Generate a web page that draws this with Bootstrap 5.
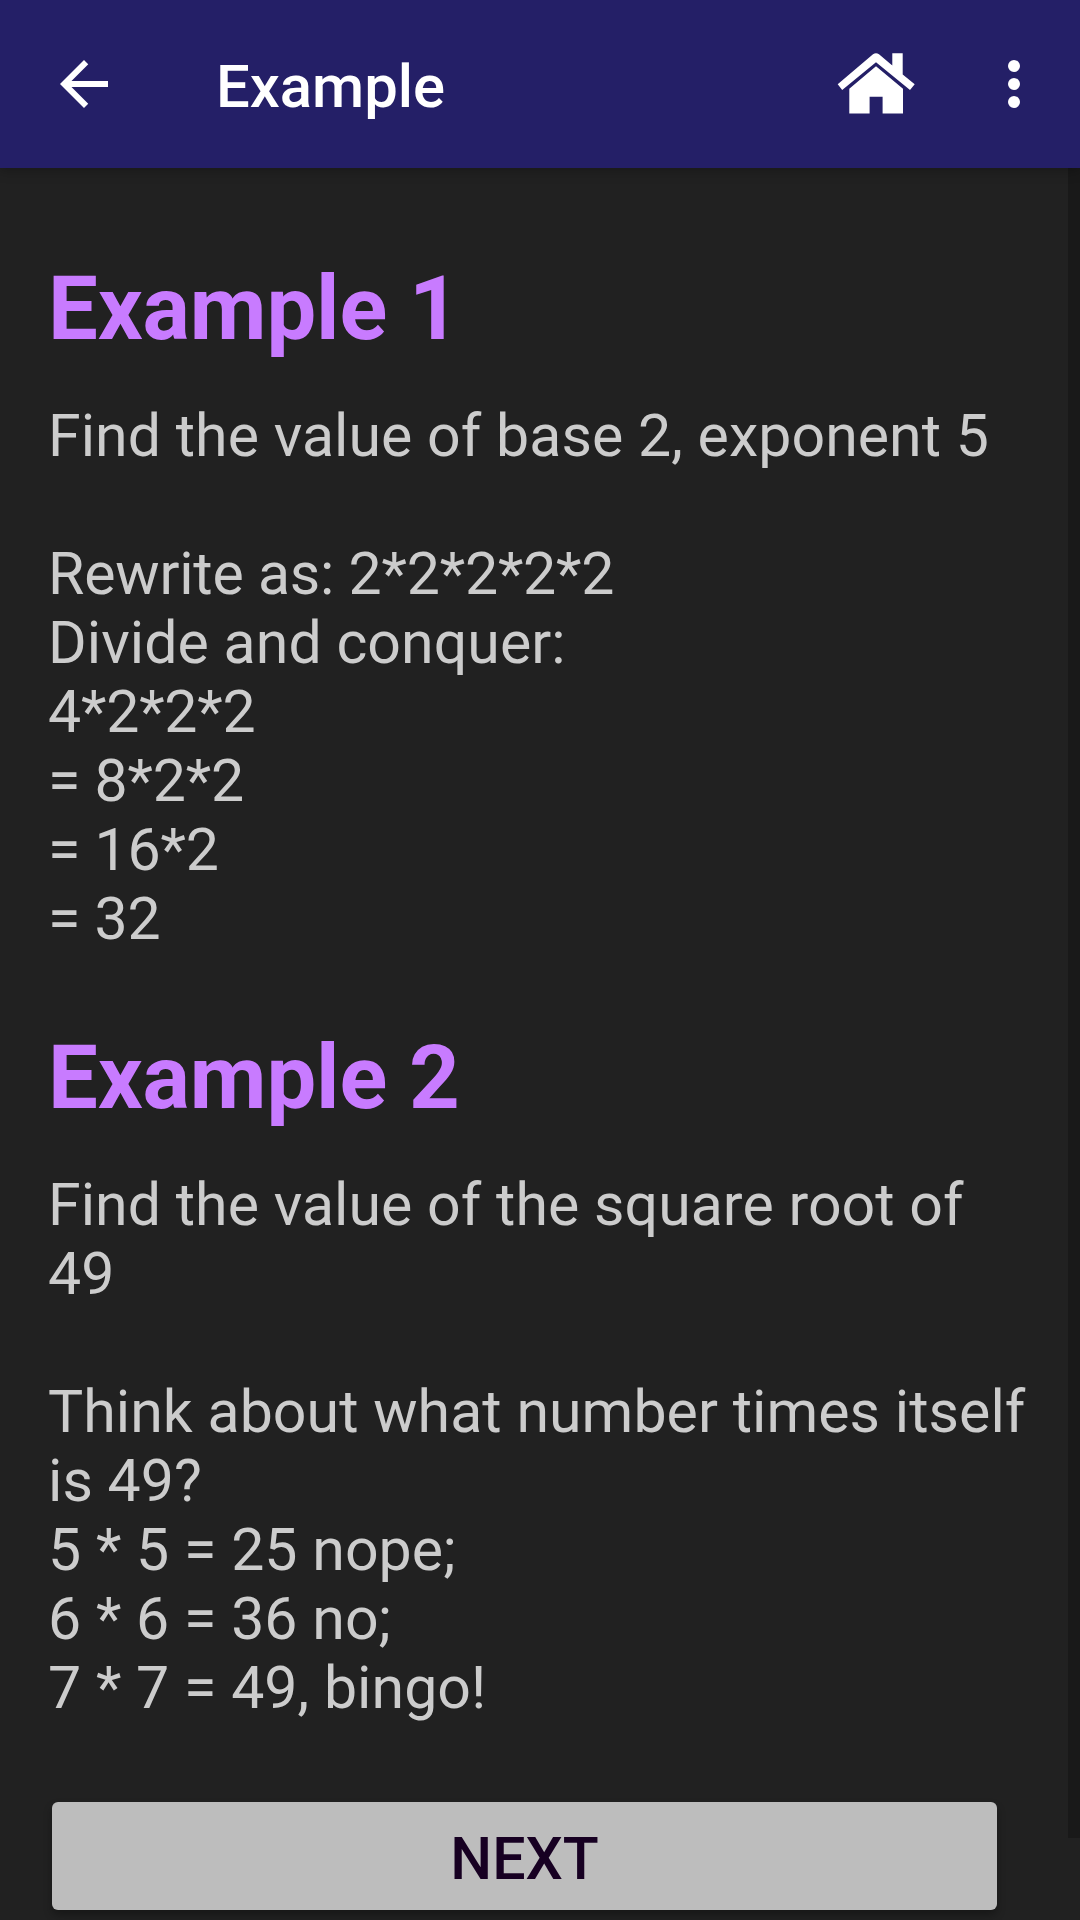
<!DOCTYPE html>
<html lang="en">
<head>
<meta charset="utf-8">
<meta name="viewport" content="width=device-width, initial-scale=1">
<title>Example</title>
<link rel="stylesheet" href="https://cdn.jsdelivr.net/npm/bootstrap@5.3.0/dist/css/bootstrap.min.css">
<style>
html, body { height: 1920px; }
body { background: #212121; color: #ccc; font-family: Roboto, sans-serif; }
.app-bar { height: 168px; background: #241f67; box-shadow: 0 2px 12px rgba(0,0,0,.3); padding: 0 30px 0 48px; z-index: 2; }
.bar-title { font-size: 59.8px; font-weight: 500; line-height: 70px; margin: 5px 0 0 96px; }
.icon-btn { line-height: 0; background: none; border: 0; padding: 0; color: #fff; }
.more-btn { margin-left: 63px; }
.lesson { padding: 89px 0 0 48px; }
.lesson-title { color: #c87bff; font-size: 88.5px; line-height: 104px; letter-spacing: -.1px; margin: 0 0 40px; }
.lesson-text { font-size: 59px; line-height: 69px; letter-spacing: .06px; margin: 0 0 73px; }
.steps { letter-spacing: -.2px; }
.next-btn { width: 945px; height: 108px; margin: 80px 0 0 4px; border: 0; border-radius: 6px; background: #bdbdbd; color: #170022; font-size: 59px; font-weight: 500; line-height: 70px; padding: 6px 0 0; box-shadow: 0 5px 9px rgba(0,0,0,.3); }
.scroll-thumb { top: 168px; right: 0; width: 12px; height: 1670px; background: #191919; }
</style>
<script src="https://cdn.jsdelivr.net/npm/bootstrap@5.3.0/dist/js/bootstrap.bundle.min.js"></script>
</head>
<body class="position-relative overflow-hidden">
<header class="app-bar d-flex align-items-center position-relative text-white">
  <button class="icon-btn" aria-label="Back">
    <svg width="72" height="72" viewBox="0 0 24 24" fill="currentColor"><path d="M20 11H7.83l5.59-5.59L12 4l-8 8 8 8 1.41-1.41L7.83 13H20v-2z"/></svg>
  </button>
  <h1 class="bar-title">Example</h1>
  <div class="d-flex align-items-center ms-auto">
    <button class="icon-btn" aria-label="Home">
      <svg width="78" height="62" viewBox="0 0 78 62" fill="currentColor"><path d="M.7 31.300 36 1.300Q39 -.7 42 1.300L55.300 12.500V.3H65.700V21.500L77.700 31.300 73 37 39 9.300 5.200 37Z"/><path d="M39 13.300 66 35.700V60.500H45.600V43.700H32.600V60.500H12.300V35.700Z"/></svg>
    </button>
    <button class="icon-btn more-btn" aria-label="More options">
      <svg width="72" height="72" viewBox="0 0 24 24" fill="currentColor"><circle cx="12" cy="6" r="2"/><circle cx="12" cy="12" r="2"/><circle cx="12" cy="18" r="2"/></svg>
    </button>
  </div>
</header>
<main class="lesson">
  <h2 class="lesson-title fw-bold">Example 1</h2>
  <p class="lesson-text">Find the value of base 2, exponent 5<br><br><span class="steps">Rewrite as: 2*2*2*2*2</span><br>Divide and conquer:<br><span class="steps">4*2*2*2<br>= 8*2*2<br>= 16*2<br>= 32</span></p>
  <h2 class="lesson-title fw-bold">Example 2</h2>
  <p class="lesson-text mb-0">Find the value of the square root of<br>49<br><br>Think about what number times itself<br>is 49?<br>5 * 5 = 25 nope;<br>6 * 6 = 36 no;<br>7 * 7 = 49, bingo!</p>
  <button class="next-btn d-block text-center text-uppercase">Next</button>
</main>
<div class="scroll-thumb position-absolute"></div>
</body>
</html>
